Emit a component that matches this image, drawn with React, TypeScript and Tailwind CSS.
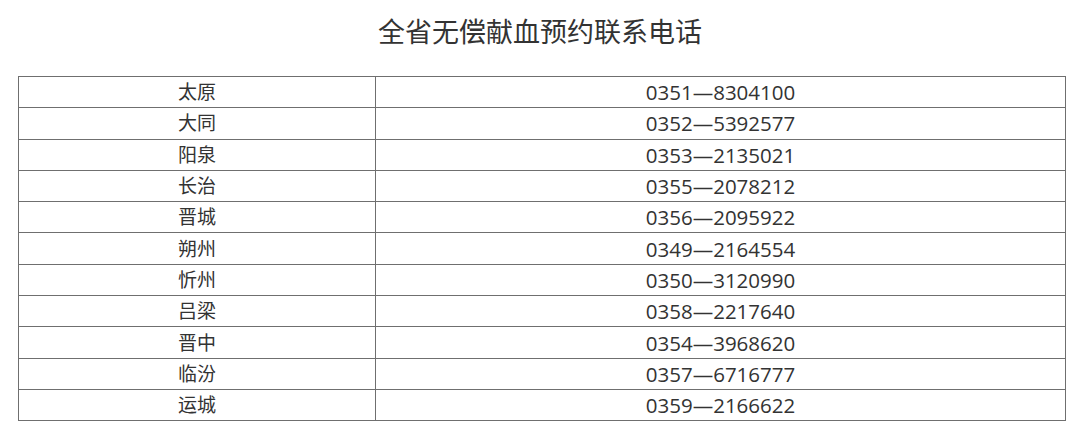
const rows: [string, string][] = [
  ["太原", "0351—8304100"],
  ["大同", "0352—5392577"],
  ["阳泉", "0353—2135021"],
  ["长治", "0355—2078212"],
  ["晋城", "0356—2095922"],
  ["朔州", "0349—2164554"],
  ["忻州", "0350—3120990"],
  ["吕梁", "0358—2217640"],
  ["晋中", "0354—3968620"],
  ["临汾", "0357—6716777"],
  ["运城", "0359—2166622"],
];

export default function App() {
  return (
    <div
      className="w-[1080px] h-[428px] bg-white text-[#333] overflow-hidden"
      style={{ fontFamily: '"Open Sans", "Noto Sans CJK SC", sans-serif' }}
    >
      <h1 className="pt-[14px] h-[76px] text-center text-[27px] leading-[36px] font-normal">
        全省无偿献血预约联系电话
      </h1>
      <table className="ml-[18px] w-[1048px] border-collapse table-fixed">
        <colgroup>
          <col className="w-[357px]" />
          <col />
        </colgroup>
        <tbody>
          {rows.map(([city, phone]) => (
            <tr key={city} className="h-[31.3px]">
              <td className="border border-[#6f6f6f] p-0 text-center text-[19px] leading-[30px]">
                {city}
              </td>
              <td className="border border-[#6f6f6f] p-0 text-center text-[20.5px] leading-[30px]">
                {phone}
              </td>
            </tr>
          ))}
        </tbody>
      </table>
    </div>
  );
}
